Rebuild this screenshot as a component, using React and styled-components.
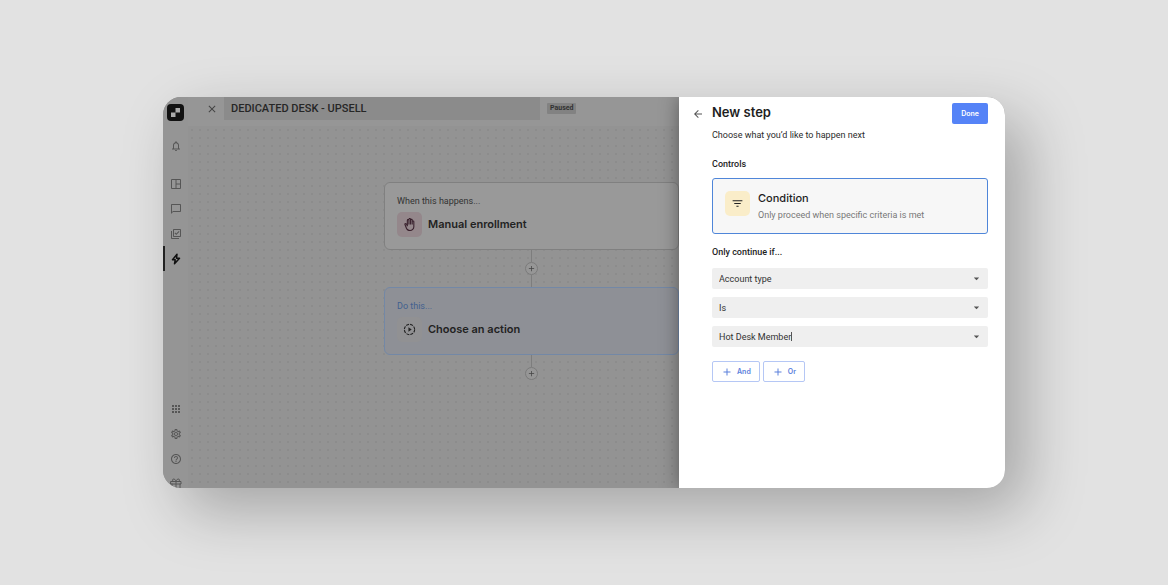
import React from 'react';
import styled, { createGlobalStyle } from 'styled-components';
import {
    MdAdd,
    MdApps,
    MdArrowBack,
    MdArrowDropDown,
    MdChatBubbleOutline,
    MdClose,
    MdFilterList,
    MdHelpOutline,
    MdNotificationsNone,
    MdOutlineBackHand,
    MdOutlineLibraryAddCheck,
    MdOutlineSettings,
} from 'react-icons/md';
import { FiGift } from 'react-icons/fi';

const displayFont = "Inter, 'Liberation Sans', sans-serif";

const GlobalStyle = createGlobalStyle`
    * {
        box-sizing: border-box;
    }

    body {
        margin: 0;
        background: #e2e2e2;
        font-family: Roboto, 'Liberation Sans', sans-serif;
        font-size: 9px;
        line-height: 12px;
        color: #2b2b2b;
    }

    button,
    input,
    select {
        font: inherit;
        color: inherit;
        margin: 0;
        padding: 0;
        border: 0;
        background: none;
    }

    h1,
    h2,
    h3,
    p {
        margin: 0;
    }

    svg {
        display: block;
    }
`;

const Page = styled.div`
    display: flex;
    min-height: 100vh;
    padding: 97px 163px;
`;

const Window = styled.div`
    flex: 1;
    display: flex;
    height: calc(100vh - 194px);
    overflow: hidden;
    border-radius: 18px;
    background: #939393;
    box-shadow: 20px 22px 60px rgba(0, 0, 0, 0.27);
`;

const Sidebar = styled.nav`
    flex: none;
    width: 25px;
    display: flex;
    flex-direction: column;
    align-items: center;
    padding-top: 7px;
    background: #959595;
`;

const Logo = styled.svg`
    flex: none;
    width: 17px;
    height: 17px;
    margin-bottom: 12px;
`;

const NavGroup = styled.div`
    align-self: stretch;
    display: flex;
    flex-direction: column;
    margin-bottom: ${props => props.$gap};
`;

const NavButton = styled.button`
    flex: none;
    display: flex;
    align-items: center;
    justify-content: center;
    height: 25px;
    padding-right: 2px;
    border-left: 2px solid ${props => (props.$active ? '#222' : 'transparent')};
    color: ${props => (props.$active ? '#111' : '#565656')};
    font-size: 12px;
`;

const Main = styled.main`
    flex: 1;
    display: flex;
    flex-direction: column;
    min-width: 0;
`;

const TopBar = styled.header`
    flex: none;
    display: flex;
    align-items: flex-start;
    height: 29px;
    background: #969696;
`;

const CloseButton = styled.button`
    display: flex;
    align-items: center;
    justify-content: center;
    width: 36px;
    height: 23px;
    padding-left: 12px;
    font-size: 12px;
    color: #444;
`;

const NameInput = styled.input`
    flex: 0 1 316px;
    min-width: 0;
    height: 23px;
    padding: 0 7px 1px;
    background: #8b8b8b;
    font-size: 11px;
    font-weight: 500;
    color: #262626;
`;

const Badge = styled.span`
    margin: 6px 0 0 7px;
    padding: 0 3px;
    border-radius: 1px;
    background: #828282;
    font-size: 7px;
    font-weight: 700;
    line-height: 11px;
    color: #333;
`;

const Canvas = styled.div`
    flex: 1;
    display: flex;
    flex-direction: column;
    align-items: flex-end;
    padding-top: 56px;
    background: #939393 radial-gradient(circle, #8c8c8c 1px, transparent 1px) 0 0 / 8px 8px;
`;

const Flow = styled.div`
    width: 295px;
    display: flex;
    flex-direction: column;
    align-items: center;
`;

const StepCard = styled.section`
    align-self: stretch;
    padding: 12px;
    border: 1px solid ${props => (props.$selected ? '#7388a6' : '#808080')};
    border-radius: 6px;
    background: ${props => (props.$selected ? '#8e9096' : '#999')};
`;

const StepHint = styled.p`
    color: ${props => (props.$selected ? '#42608f' : '#333')};
`;

const StepBody = styled.div`
    display: flex;
    align-items: center;
    gap: 6px;
    margin-top: 5px;
`;

const IconTile = styled.div`
    flex: none;
    display: flex;
    align-items: center;
    justify-content: center;
    width: 25px;
    height: 25px;
    border-radius: 5px;
    background: ${props => props.$color};
    color: ${props => props.$ink || '#222'};
    font-size: 13px;
`;

const StepTitle = styled.h2`
    padding-bottom: 2px;
    font-family: ${displayFont};
    font-size: 11px;
    font-weight: 600;
    line-height: 14px;
    color: #222;
`;

const Line = styled.div`
    width: 1px;
    height: 12px;
    background: #7d7d7d;
`;

const AddStep = styled.button`
    display: flex;
    align-items: center;
    justify-content: center;
    width: 13px;
    height: 13px;
    border: 1px solid #7b7b7b;
    border-radius: 50%;
    background: #969696;
    font-size: 9px;
    color: #444;

    svg {
        flex: none;
    }
`;

const Drawer = styled.aside`
    flex: none;
    z-index: 1;
    width: 326px;
    background: #fff;
    box-shadow: 0 0 18px rgba(0, 0, 0, 0.4);
`;

const DrawerHeader = styled.header`
    display: flex;
    align-items: flex-start;
    gap: 8px;
    padding: 6px 17px 0 13px;
`;

const BackButton = styled.button`
    display: flex;
    align-items: center;
    height: 21px;
    font-size: 12px;
    color: #555;
`;

const DrawerTitle = styled.h1`
    flex: 1;
    font-family: ${displayFont};
    font-size: 13px;
    font-weight: 600;
    line-height: 18px;
    color: #1e1e1e;
`;

const DoneButton = styled.button`
    width: 36px;
    height: 21px;
    border-radius: 2px;
    background: #5583f7;
    font-family: ${displayFont};
    font-size: 7px;
    font-weight: 600;
    color: #fff;
`;

const DrawerBody = styled.div`
    display: flex;
    flex-direction: column;
    padding: 5px 17px 17px 33px;
`;

const SectionTitle = styled.h2`
    margin: ${props => props.$top} 0 0;
    font-size: 9px;
    font-weight: 500;
    line-height: 12px;
    color: #1e1e1e;
`;

const ControlCard = styled.button`
    display: flex;
    align-items: flex-start;
    gap: 8px;
    margin-top: 8px;
    padding: 12px;
    border: 1px solid #4f86d9;
    border-radius: 3px;
    background: #f7f7f7;
    text-align: left;
`;

const ControlText = styled.span`
    display: flex;
    flex-direction: column;
    gap: 4px;
    color: #777;
`;

const ControlName = styled.span`
    font-family: ${displayFont};
    font-size: 11px;
    font-weight: 500;
    line-height: 14px;
    color: #1e1e1e;
`;

const Fields = styled.div`
    display: flex;
    flex-direction: column;
    gap: 8px;
    margin-top: 10px;
`;

const Field = styled.div`
    display: grid;
    grid-template-columns: 1fr 24px;
    align-items: center;
    height: 21px;
    border-radius: 2px;
    background: #efefef;
    color: #333;

    > svg {
        grid-area: 1 / 2;
        justify-self: center;
        font-size: 13px;
        color: #555;
        pointer-events: none;
    }
`;

const Select = styled.select`
    grid-area: 1 / 1 / 2 / 3;
    height: 21px;
    padding: 0 24px 0 7px;
    appearance: none;
`;

const Combo = styled.div`
    grid-area: 1 / 1;
    display: flex;
    align-items: center;
    padding-left: 7px;
`;

const ComboInput = styled.input`
    field-sizing: content;
    outline: 0;
    caret-color: transparent;
`;

const Caret = styled.span`
    width: 1px;
    height: 9px;
    background: #555;
`;

const Actions = styled.div`
    display: flex;
    gap: 3px;
    margin-top: 14px;
`;

const RuleButton = styled.button`
    display: flex;
    align-items: center;
    gap: 4px;
    height: 21px;
    padding: 0 8px;
    border: 1px solid #b5c7f5;
    border-radius: 2px;
    font-family: ${displayFont};
    font-size: 7px;
    font-weight: 600;
    color: #5b80dc;

    svg {
        font-size: 12px;
    }
`;

const DashboardIcon = () => (
    <svg width="1em" height="1em" viewBox="0 0 24 24" fill="none" stroke="currentColor" strokeWidth="2">
        <path d="M3 3h18v18H3zM12 3v18M12 12h9" />
    </svg>
);

const BoltIcon = () => (
    <svg width="1em" height="1em" viewBox="0 0 24 24" fill="none" stroke="currentColor" strokeWidth="3" strokeLinejoin="round">
        <path d="M14 2.500 5 13.500h5.500L9 21.500 19 10.500h-6z" />
    </svg>
);

const ActionIcon = () => (
    <svg width="1em" height="1em" viewBox="0 0 24 24" fill="none" stroke="currentColor" strokeWidth="2">
        <circle cx="12" cy="12" r="9.5" strokeDasharray="5.5 1.96" />
        <path d="M10 8l6 4-6 4z" fill="currentColor" stroke="none" />
    </svg>
);

const mainNav = [
    { name: 'Dashboard', icon: <DashboardIcon /> },
    { name: 'Messages', icon: <MdChatBubbleOutline /> },
    { name: 'Tasks', icon: <MdOutlineLibraryAddCheck /> },
    { name: 'Automations', icon: <BoltIcon />, active: true },
];

const footerNav = [
    { name: 'Apps', icon: <MdApps /> },
    { name: 'Settings', icon: <MdOutlineSettings /> },
    { name: 'Help', icon: <MdHelpOutline /> },
    { name: 'Rewards', icon: <FiGift /> },
];

const renderNav = items =>
    items.map(item => (
        <NavButton key={item.name} aria-label={item.name} $active={item.active}>
            {item.icon}
        </NavButton>
    ));

const SelectField = ({ label, value }) => (
    <Field>
        <Select aria-label={label} defaultValue={value}>
            <option>{value}</option>
        </Select>
        <MdArrowDropDown />
    </Field>
);

export default () => {
    return (
        <Page>
            <GlobalStyle />
            <Window>
                <Sidebar>
                    <Logo viewBox="0 0 17 17">
                        <rect width="17" height="17" rx="4" fill="#111" />
                        <path d="M8.5 4h4.5v4.5H8.5zM4 8.500h4.500V13H4z" fill="#aaa" />
                    </Logo>
                    <NavGroup $gap="13px">
                        <NavButton aria-label="Notifications">
                            <MdNotificationsNone />
                        </NavButton>
                    </NavGroup>
                    <NavGroup $gap="auto">{renderNav(mainNav)}</NavGroup>
                    <NavGroup $gap="-8px">{renderNav(footerNav)}</NavGroup>
                </Sidebar>
                <Main>
                    <TopBar>
                        <CloseButton aria-label="Close">
                            <MdClose />
                        </CloseButton>
                        <NameInput aria-label="Workflow name" defaultValue="DEDICATED DESK - UPSELL" />
                        <Badge>Paused</Badge>
                    </TopBar>
                    <Canvas>
                        <Flow>
                            <StepCard>
                                <StepHint>When this happens...</StepHint>
                                <StepBody>
                                    <IconTile $color="#94878b" $ink="#38202c">
                                        <MdOutlineBackHand />
                                    </IconTile>
                                    <StepTitle>Manual enrollment</StepTitle>
                                </StepBody>
                            </StepCard>
                            <Line />
                            <AddStep aria-label="Add step">
                                <MdAdd />
                            </AddStep>
                            <Line />
                            <StepCard $selected>
                                <StepHint $selected>Do this...</StepHint>
                                <StepBody>
                                    <IconTile $color="#919193">
                                        <ActionIcon />
                                    </IconTile>
                                    <StepTitle>Choose an action</StepTitle>
                                </StepBody>
                            </StepCard>
                            <Line />
                            <AddStep aria-label="Add step">
                                <MdAdd />
                            </AddStep>
                        </Flow>
                    </Canvas>
                </Main>
                <Drawer>
                    <DrawerHeader>
                        <BackButton aria-label="Back">
                            <MdArrowBack />
                        </BackButton>
                        <DrawerTitle>New step</DrawerTitle>
                        <DoneButton>Done</DoneButton>
                    </DrawerHeader>
                    <DrawerBody>
                        <p>Choose what you’d like to happen next</p>
                        <SectionTitle $top="17px">Controls</SectionTitle>
                        <ControlCard>
                            <IconTile $color="#faedc9">
                                <MdFilterList />
                            </IconTile>
                            <ControlText>
                                <ControlName>Condition</ControlName>
                                Only proceed when specific criteria is met
                            </ControlText>
                        </ControlCard>
                        <SectionTitle $top="12px">Only continue if...</SectionTitle>
                        <Fields>
                            <SelectField label="Attribute" value="Account type" />
                            <SelectField label="Operator" value="Is" />
                            <Field>
                                <Combo>
                                    <ComboInput aria-label="Value" defaultValue="Hot Desk Member" />
                                    <Caret />
                                </Combo>
                                <MdArrowDropDown />
                            </Field>
                        </Fields>
                        <Actions>
                            <RuleButton>
                                <MdAdd />
                                And
                            </RuleButton>
                            <RuleButton>
                                <MdAdd />
                                Or
                            </RuleButton>
                        </Actions>
                    </DrawerBody>
                </Drawer>
            </Window>
        </Page>
    );
};
